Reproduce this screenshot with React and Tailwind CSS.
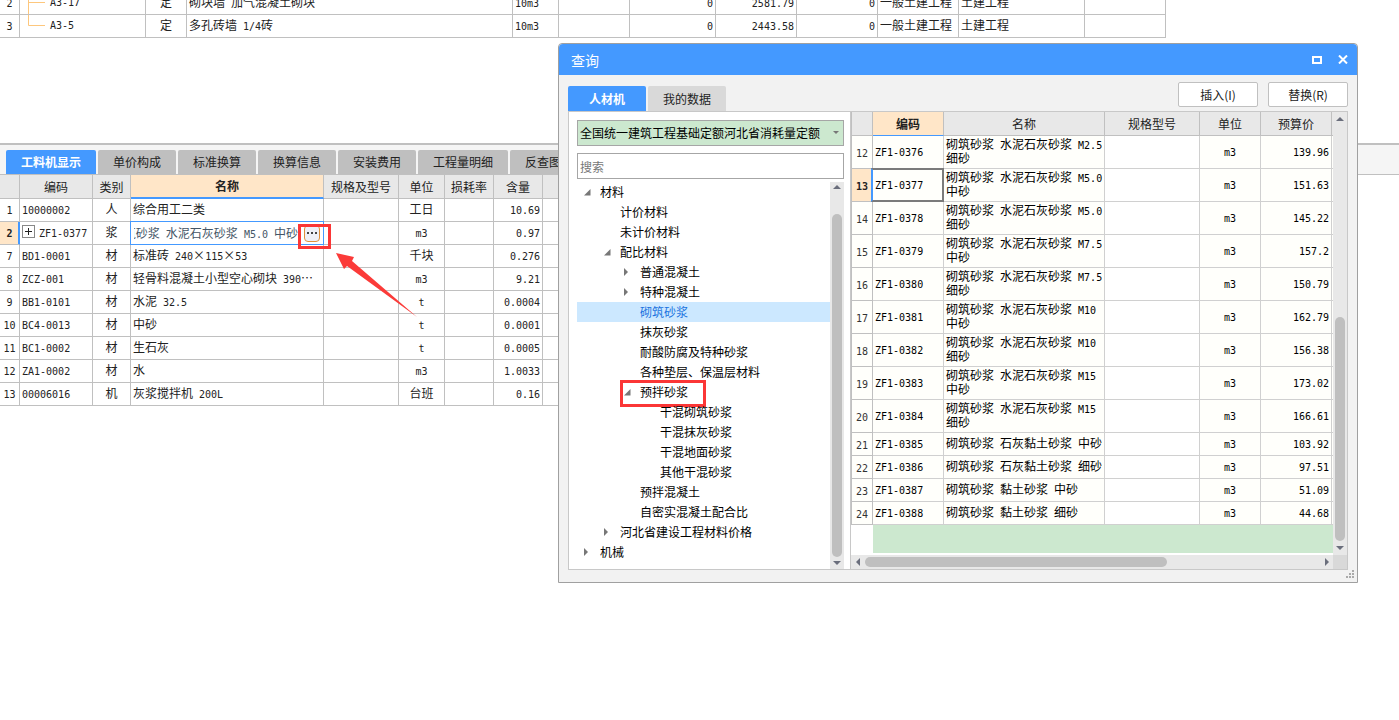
import { Fragment } from "react";

const topRows = [
  { no: 2, code: "A3-17", type: "定", name: "砌块墙 加气混凝土砌块", unit: "10m3", qty: "0", price: "2581.79", total: "0", major: "一般土建工程", kind: "土建工程" },
  { no: 3, code: "A3-5", type: "定", name: "多孔砖墙 1/4砖", unit: "10m3", qty: "0", price: "2443.58", total: "0", major: "一般土建工程", kind: "土建工程" },
];

const detailTabs = [
  "工料机显示",
  "单价构成",
  "标准换算",
  "换算信息",
  "安装费用",
  "工程量明细",
  "反查图形工程量",
];

const detailRows = [
  { no: 1, code: "10000002", type: "人", name: "综合用工二类", unit: "工日", amount: "10.69" },
  { no: 2, code: "ZF1-0377", type: "浆", name: "筑砂浆 水泥石灰砂浆 M5.0 中砂", unit: "m3", amount: "0.97" },
  { no: 7, code: "BD1-0001", type: "材", name: "标准砖 240×115×53", unit: "千块", amount: "0.276" },
  { no: 8, code: "ZCZ-001", type: "材", name: "轻骨料混凝土小型空心砌块 390⋯", unit: "m3", amount: "9.21" },
  { no: 9, code: "BB1-0101", type: "材", name: "水泥 32.5", unit: "t", amount: "0.0004" },
  { no: 10, code: "BC4-0013", type: "材", name: "中砂", unit: "t", amount: "0.0001" },
  { no: 11, code: "BC1-0002", type: "材", name: "生石灰", unit: "t", amount: "0.0005" },
  { no: 12, code: "ZA1-0002", type: "材", name: "水", unit: "m3", amount: "1.0033" },
  { no: 13, code: "00006016", type: "机", name: "灰浆搅拌机 200L", unit: "台班", amount: "0.16" },
];

const tree = [
  { label: "材料", level: 0, state: "open" },
  { label: "计价材料", level: 1 },
  { label: "未计价材料", level: 1 },
  { label: "配比材料", level: 1, state: "open" },
  { label: "普通混凝土", level: 2, state: "closed" },
  { label: "特种混凝土", level: 2, state: "closed" },
  { label: "砌筑砂浆", level: 2, selected: true },
  { label: "抹灰砂浆", level: 2 },
  { label: "耐酸防腐及特种砂浆", level: 2 },
  { label: "各种垫层、保温层材料", level: 2 },
  { label: "预拌砂浆", level: 2, state: "open", marked: true },
  { label: "干混砌筑砂浆", level: 3 },
  { label: "干混抹灰砂浆", level: 3 },
  { label: "干混地面砂浆", level: 3 },
  { label: "其他干混砂浆", level: 3 },
  { label: "预拌混凝土", level: 2 },
  { label: "自密实混凝土配合比", level: 2 },
  { label: "河北省建设工程材料价格", level: 1, state: "closed" },
  { label: "机械", level: 0, state: "closed" },
];

const indent = ["pl-[7px]", "pl-[27px]", "pl-[47px]", "pl-[67px]"];

const materials = [
  { no: 12, code: "ZF1-0376", name: ["砌筑砂浆 水泥石灰砂浆 M2.5", "细砂"], price: "139.96" },
  { no: 13, code: "ZF1-0377", name: ["砌筑砂浆 水泥石灰砂浆 M5.0", "中砂"], price: "151.63" },
  { no: 14, code: "ZF1-0378", name: ["砌筑砂浆 水泥石灰砂浆 M5.0", "细砂"], price: "145.22" },
  { no: 15, code: "ZF1-0379", name: ["砌筑砂浆 水泥石灰砂浆 M7.5", "中砂"], price: "157.2" },
  { no: 16, code: "ZF1-0380", name: ["砌筑砂浆 水泥石灰砂浆 M7.5", "细砂"], price: "150.79" },
  { no: 17, code: "ZF1-0381", name: ["砌筑砂浆 水泥石灰砂浆 M10", "中砂"], price: "162.79" },
  { no: 18, code: "ZF1-0382", name: ["砌筑砂浆 水泥石灰砂浆 M10", "细砂"], price: "156.38" },
  { no: 19, code: "ZF1-0383", name: ["砌筑砂浆 水泥石灰砂浆 M15", "中砂"], price: "173.02" },
  { no: 20, code: "ZF1-0384", name: ["砌筑砂浆 水泥石灰砂浆 M15", "细砂"], price: "166.61" },
  { no: 21, code: "ZF1-0385", name: ["砌筑砂浆 石灰黏土砂浆 中砂"], price: "103.92" },
  { no: 22, code: "ZF1-0386", name: ["砌筑砂浆 石灰黏土砂浆 细砂"], price: "97.51" },
  { no: 23, code: "ZF1-0387", name: ["砌筑砂浆 黏土砂浆 中砂"], price: "51.09" },
  { no: 24, code: "ZF1-0388", name: ["砌筑砂浆 黏土砂浆 细砂"], price: "44.68" },
];

// Latin runs take half the width of a Chinese character
function Mixed({ children }) {
  return String(children)
    .split(/([\x20-\x7e]+)/)
    .map((part, i) =>
      i % 2 ? (
        <span key={i} className="font-['DejaVu_Sans_Mono',monospace] text-[10px] leading-none whitespace-pre">
          {part}
        </span>
      ) : (
        <Fragment key={i}>{part}</Fragment>
      )
    );
}

function Cell({ className = "", children }) {
  return (
    <td className={`h-[23px] border-r border-b border-[#c0c0c0] px-0.5 pt-0 pb-[3px] leading-[14px] whitespace-nowrap ${className}`}>
      {children}
    </td>
  );
}

function HeadCell({ className = "border-b border-[#c0c0c0]", children }) {
  return (
    <th
      scope="col"
      className={`h-6 border-r p-0 leading-[14px] whitespace-nowrap ${className}`}
    >
      {children}
    </th>
  );
}

function Cols({ widths }) {
  return (
    <colgroup>
      {widths.map((w, i) => (
        <col key={i} className={w} />
      ))}
    </colgroup>
  );
}

function QuotaTable() {
  return (
    <div className="flex h-[38px] items-end overflow-hidden">
      <table className="w-[1166px] shrink-0 table-fixed border-separate border-spacing-0">
        <Cols
          widths={[
            "w-[20px]", "w-[126px]", "w-[41px]", "w-[326px]", "w-[46px]", "w-[71px]",
            "w-[86px]", "w-[81px]", "w-[81px]", "w-[81px]", "w-[126px]", "w-[81px]",
          ]}
        />
        <tbody>
          {topRows.map((row, i) => (
            <tr key={row.no}>
              <Cell className="text-center"><Mixed>{row.no}</Mixed></Cell>
              <td className="h-[23px] border-r border-b border-[#c0c0c0] p-0 leading-[14px]">
                <div className="flex items-center">
                  <svg width="28" height="22" className="mr-0.5 shrink-0" stroke="#fdc77d">
                    <path d={i === topRows.length - 1 ? "M8.5 0V10.5H25" : "M8.5 0V22M8.5 10.5H25"} fill="none" />
                  </svg>
                  <Mixed>{row.code}</Mixed>
                </div>
              </td>
              <Cell className="text-center">{row.type}</Cell>
              <Cell><Mixed>{row.name}</Mixed></Cell>
              <Cell><Mixed>{row.unit}</Mixed></Cell>
              <Cell />
              <Cell className="text-right"><Mixed>{row.qty}</Mixed></Cell>
              <Cell className="text-right"><Mixed>{row.price}</Mixed></Cell>
              <Cell className="text-right"><Mixed>{row.total}</Mixed></Cell>
              <Cell>{row.major}</Cell>
              <Cell>{row.kind}</Cell>
              <Cell />
            </tr>
          ))}
        </tbody>
      </table>
    </div>
  );
}

function NameEditor({ value }) {
  return (
    <div className="relative flex h-[22px] items-center">
      <div className="absolute -top-px -right-px -bottom-px -left-px border border-[#4499ff]" />
      <div
        role="textbox"
        aria-label="名称"
        contentEditable
        suppressContentEditableWarning
        className="ml-[3px] flex w-[164px] justify-end overflow-hidden whitespace-nowrap text-[#445566]"
      >
        <span>
          <Mixed>{value}</Mixed>
        </span>
      </div>
      <button
        aria-label="选择"
        className="relative ml-1.5 flex h-[17px] w-4 items-center justify-center rounded-sm border border-[#e0903c] bg-[#eef0f8]"
      >
        <svg width="10" height="2" fill="#444" className="shrink-0">
          <path d="M0 0h2v2H0zM4 0h2v2H4zM8 0h2v2H8z" />
        </svg>
      </button>
      <div className="absolute top-0.5 left-[167px] z-10 h-[25px] w-[33px] border-3 border-[#fb3636]" />
      <svg width="82" height="65" className="absolute top-[31px] left-[205px] z-10" fill="#fb3b39">
        <path d="M0 0L18 4L16 8L81 64L11 13L8 16Z" />
      </svg>
    </div>
  );
}

function DetailPane() {
  return (
    <section>
      <div role="tablist" className="flex gap-0.5 overflow-hidden border-t-2 border-b border-[#c0c0c0] bg-[#f5f5f5] pt-[5px] pl-1.5">
        {detailTabs.map((tab, i) => (
          <button
            key={tab}
            role="tab"
            aria-selected={i === 0}
            className={`h-6 shrink-0 rounded-t-xs px-[15px] ${
              i === 0 ? "bg-[#4499ff] font-bold text-white" : "bg-[#bfbfbf] text-[#222]"
            }`}
          >
            {tab}
          </button>
        ))}
      </div>
      <table className="w-[943px] table-fixed border-separate border-spacing-0">
        <Cols
          widths={[
            "w-[20px]", "w-[73px]", "w-[38px]", "w-[193px]", "w-[75px]",
            "w-[46px]", "w-[49px]", "w-[49px]", "w-[400px]",
          ]}
        />
        <thead className="bg-[#e8e8e8]">
          <tr>
            <HeadCell />
            <HeadCell className="border-b border-[#c0c0c0] font-normal">编码</HeadCell>
            <HeadCell className="border-b border-[#c0c0c0] font-normal">类别</HeadCell>
            <HeadCell className="border-b-2 border-r-[#c0c0c0] border-b-[#4499ff] bg-[#ffe6c8] font-bold">名称</HeadCell>
            <HeadCell className="border-b border-[#c0c0c0] font-normal">规格及型号</HeadCell>
            <HeadCell className="border-b border-[#c0c0c0] font-normal">单位</HeadCell>
            <HeadCell className="border-b border-[#c0c0c0] font-normal">损耗率</HeadCell>
            <HeadCell className="border-b border-[#c0c0c0] font-normal">含量</HeadCell>
            <HeadCell />
          </tr>
        </thead>
        <tbody>
          {detailRows.map((row) => {
            const active = row.no === 2;
            return (
              <tr key={row.no}>
                <Cell
                  className={`text-center ${
                    active ? "border-r-[#4499ff] bg-[#ffe6c8] font-bold shadow-[inset_-1px_0_0_#4499ff]" : ""
                  }`}
                >
                  <Mixed>{row.no}</Mixed>
                </Cell>
                <Cell>
                  <div className="flex items-center gap-1">
                    {active && (
                      <button aria-label="展开" className="flex size-[13px] items-center justify-center border border-[#888]">
                        <svg width="7" height="7" stroke="#222">
                          <path d="M0 3.5H7M3.5 0V7" />
                        </svg>
                      </button>
                    )}
                    <span>
                      <Mixed>{row.code}</Mixed>
                    </span>
                  </div>
                </Cell>
                <Cell className="text-center">{row.type}</Cell>
                {active ? (
                  <td className="h-[23px] border-r border-b border-[#4499ff] p-0 leading-[14px]">
                    <NameEditor value={row.name} />
                  </td>
                ) : (
                  <Cell><Mixed>{row.name}</Mixed></Cell>
                )}
                <Cell />
                <Cell className="text-center"><Mixed>{row.unit}</Mixed></Cell>
                <Cell />
                <Cell className="text-right"><Mixed>{row.amount}</Mixed></Cell>
                <Cell />
              </tr>
            );
          })}
        </tbody>
      </table>
    </section>
  );
}

function Arrow({ dir }) {
  const paths = {
    up: "M0 5L5 0L10 5Z",
    down: "M0 0L5 5L10 0Z",
    left: "M5 0L0 5L5 10Z",
    right: "M0 0L5 5L0 10Z",
  };
  const flat = dir === "up" || dir === "down";
  return (
    <svg
      width={flat ? 8 : 4}
      height={flat ? 4 : 8}
      viewBox={flat ? "0 0 10 5" : "0 0 5 10"}
      fill="#6a6e7c"
      className="shrink-0"
    >
      <path d={paths[dir]} />
    </svg>
  );
}

function VScroll({ className, thumb }) {
  return (
    <div className={`flex w-3.5 shrink-0 flex-col items-center bg-[#e8e8e8] ${className}`}>
      <Arrow dir="up" />
      <div className={`w-2.5 shrink-0 rounded-full bg-[#bfbfbf] ${thumb}`} />
      <div className="flex flex-1 items-center">
        <Arrow dir="down" />
      </div>
    </div>
  );
}

function TreePane() {
  return (
    <div className="flex w-[282px] shrink-0 flex-col border-r border-[#c8c8c8] bg-white pt-2 pr-1.5 pl-2">
      <div className="relative">
        <select
          aria-label="定额库"
          className="block h-[26px] w-full appearance-none rounded-none border border-[#a6a6a6] bg-[#cce8cf] pl-0.5 text-black"
        >
          <option>全国统一建筑工程基础定额河北省消耗量定额</option>
        </select>
        <svg width="6" height="3" className="pointer-events-none absolute top-[11px] right-[5px]" fill="#777">
          <path d="M0 0H6L3 3Z" />
        </svg>
      </div>
      <input
        type="text"
        aria-label="搜索"
        placeholder="搜索"
        className="mt-[7px] block h-[26px] w-full border border-[#a6a6a6] bg-white pl-0.5 placeholder:text-[#777]"
      />
      <div className="mt-[3px] flex">
        <ul role="tree" className="flex-1 text-black">
          {tree.map((node) => (
            <li
              key={node.label}
              role="treeitem"
              aria-selected={!!node.selected}
              className={`relative flex h-5 items-center whitespace-nowrap ${indent[node.level]} ${
                node.selected ? "bg-[#cce8ff] text-[#1a73e0]" : ""
              }`}
            >
              <span className="w-4 shrink-0">
                {node.state === "open" && (
                  <svg width="7" height="7" fill="#777">
                    <path d="M6.5 0V6.5H0Z" />
                  </svg>
                )}
                {node.state === "closed" && (
                  <svg width="4" height="8" fill="#777">
                    <path d="M0 0L4 4L0 8Z" />
                  </svg>
                )}
              </span>
              {node.label}
              {node.marked && (
                <span className="absolute -top-0.5 left-[43px] h-[27px] w-[86px] border-3 border-[#fb3636]" />
              )}
            </li>
          ))}
        </ul>
        <VScroll className="h-[387px] pt-[3px]" thumb="mt-[25px] h-[343px]" />
      </div>
    </div>
  );
}

function MaterialGrid() {
  return (
    <div className="flex min-w-0 flex-1 flex-col bg-white">
      <div className="flex">
        <div className="min-w-0 flex-1">
          <table className="w-full table-fixed border-separate border-spacing-0">
            <Cols
              widths={["w-[22px]", "w-[71px]", "w-[161px]", "w-[95px]", "w-[61px]", "w-[71px]", "w-auto"]}
            />
            <thead className="bg-[#e8e8e8]">
              <tr>
                <HeadCell className="border-b border-l border-[#c0c0c0]" />
                <HeadCell className="border-b border-r-[#c0c0c0] border-b-[#4499ff] bg-[#ffe6c8] font-bold">编码</HeadCell>
                <HeadCell className="border-b border-[#c0c0c0] font-normal">名称</HeadCell>
                <HeadCell className="border-b border-[#c0c0c0] font-normal">规格型号</HeadCell>
                <HeadCell className="border-b border-[#c0c0c0] font-normal">单位</HeadCell>
                <HeadCell className="border-b border-[#c0c0c0] font-normal">预算价</HeadCell>
                <HeadCell className="border-r-0 border-b border-[#c0c0c0]" />
              </tr>
            </thead>
            <tbody className="bg-[#fffffb] text-black">
              {materials.map((row) => {
                const active = row.no === 13;
                const tall = row.name.length > 1 ? "h-[33px]" : "h-[23px]";
                return (
                  <tr key={row.no}>
                    <td
                      className={`border-r border-b border-l border-[#c0c0c0] px-0 pt-0 pb-px text-center leading-[14px] ${tall} ${
                        active ? "bg-[#ffe6c8] font-bold text-[#222]" : "text-[#333]"
                      }`}
                    >
                      <Mixed>{row.no}</Mixed>
                    </td>
                    <td className="relative border-r border-b border-[#d0d0d0] px-0.5 pt-0 pb-[3px] leading-[14px]">
                      {active && (
                        <span className="absolute -top-px -right-px -bottom-px -left-0.5 border-2 border-[#7b7b7b] border-l-[#4499ff]" />
                      )}
                      <Mixed>{row.code}</Mixed>
                    </td>
                    <td className="border-r border-b border-[#d0d0d0] px-0.5 pt-0 pb-[3px] leading-[14px] whitespace-nowrap">
                      {row.name.map((line) => (
                        <div key={line}>
                          <Mixed>{line}</Mixed>
                        </div>
                      ))}
                    </td>
                    <td className="border-r border-b border-[#d0d0d0] bg-white p-0" />
                    <td className="border-r border-b border-[#d0d0d0] px-0 pt-0 pb-[3px] text-center leading-[14px]">
                      <Mixed>m3</Mixed>
                    </td>
                    <td className="border-r border-b border-[#d0d0d0] px-0.5 pt-0 pb-[3px] text-right leading-[14px]">
                      <Mixed>{row.price}</Mixed>
                    </td>
                    <td className="border-b border-[#d0d0d0] p-0" />
                  </tr>
                );
              })}
            </tbody>
          </table>
          <div className="mb-0.5 ml-[22px] h-7 bg-[#cce8cf]" />
        </div>
        <VScroll className="pt-[5px]" thumb="mt-[196px] h-[224px]" />
      </div>
      <div className="flex h-3.5">
        <div className="flex flex-1 items-center bg-[#e8e8e8] pr-1 pl-[5px]">
          <Arrow dir="left" />
          <div className="ml-[5px] h-2.5 w-[302px] rounded-full bg-[#bfbfbf]" />
          <div className="ml-auto">
            <Arrow dir="right" />
          </div>
        </div>
        <div className="w-3.5 bg-[#d9d9d9]" />
      </div>
    </div>
  );
}

function QueryDialog() {
  return (
    <div
      role="dialog"
      aria-label="查询"
      className="absolute top-[43px] left-[558px] z-20 w-[800px] rounded-t-sm border border-[#a0a0a0] bg-[#f2f2f2]"
    >
      <div className="flex h-[31px] items-center rounded-t-sm bg-[#4499ff] pr-[9px] pl-3 text-white">
        <h2 className="text-sm">查询</h2>
        <button aria-label="最大化" className="mr-4 ml-auto">
          <svg width="10" height="8" fill="none" stroke="white" strokeWidth="2" className="block">
            <path d="M1 1H9V7H1Z" />
          </svg>
        </button>
        <button aria-label="关闭">
          <svg width="10" height="9" fill="none" stroke="white" strokeWidth="2" className="block">
            <path d="M1 0.5L9 8.5M9 0.5L1 8.5" />
          </svg>
        </button>
      </div>

      <div className="flex h-9 items-end gap-0.5 px-[9px]">
        <button className="h-[25px] w-[78px] rounded-t-xs bg-[#4499ff] font-bold text-white">人材机</button>
        <button className="h-[25px] w-[78px] rounded-t-xs bg-[#d9d9d9]">我的数据</button>
        <div className="mb-1 ml-auto flex gap-2.5">
          <button className="h-[25px] w-20 rounded-xs border border-[#c0c0c0] bg-white">插入(I)</button>
          <button className="h-[25px] w-20 rounded-xs border border-[#c0c0c0] bg-white">替换(R)</button>
        </div>
      </div>

      <div className="mx-[9px] flex border border-[#c8c8c8]">
        <TreePane />
        <MaterialGrid />
      </div>

      <div className="flex h-3 items-start justify-end pr-0.5">
        <svg width="9" height="9" fill="#aaa">
          <path d="M6 0h2v2H6zM3 3h2v2H3zM6 3h2v2H6zM0 6h2v2H0zM3 6h2v2H3zM6 6h2v2H6z" />
        </svg>
      </div>
    </div>
  );
}

export default function App() {
  return (
    <main
      lang="zh-CN"
      className="relative min-h-screen overflow-hidden bg-white font-['Noto_Sans_CJK_SC',sans-serif] text-xs text-[#222]"
    >
      <div className="h-[143px]">
        <QuotaTable />
      </div>
      <DetailPane />
      <QueryDialog />
    </main>
  );
}
